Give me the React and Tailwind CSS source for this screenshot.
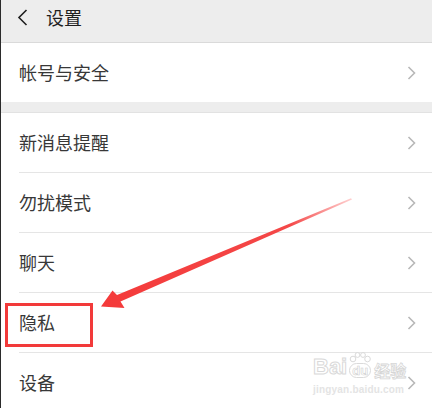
import React from "react";

const groupTwo = ["新消息提醒", "勿扰模式", "聊天", "隐私", "设备"];

const Chevron = () => (
  <svg width="9" height="14" viewBox="0 0 9 14" className="shrink-0">
    <path d="M1.5 1 L7.5 7 L1.5 13" fill="none" stroke="#b8b8b8" strokeWidth="1.6" />
  </svg>
);

const Row = ({ label, last }) => (
  <div className="bg-white">
    <div className="h-[59px] flex items-center justify-between pl-[18px] pr-[16px]">
      <span className="text-[18px] text-[#383838]">{label}</span>
      <Chevron />
    </div>
    {!last && <div className="ml-[18px] h-px bg-[#e5e5e5]" />}
  </div>
);

export default function App() {
  return (
    <div
      className="relative w-[432px] h-[408px] overflow-hidden bg-white border-l border-[#2b2b2b]"
      style={{ fontFamily: '"Noto Sans CJK SC", "Noto Sans", sans-serif' }}
    >
      {/* Header */}
      <div className="h-[42px] bg-[#ededed] flex items-center pl-[16px] pb-[8px] gap-[18px]">
        <svg width="11" height="17" viewBox="0 0 11 17">
          <path d="M9.5 1 L2 8.5 L9.5 16" fill="none" stroke="#1f1f1f" strokeWidth="1.6" />
        </svg>
        <span className="text-[18px] text-[#1f1f1f]">设置</span>
      </div>
      <div className="h-px bg-[#dadada]" />

      <Row label="帐号与安全" last />

      <div className="h-[10px] bg-[#ededed]" />
      <div className="h-px bg-[#e2e2e2]" />

      {groupTwo.map((label, i) => (
        <Row key={label} label={label} last={i === groupTwo.length - 1} />
      ))}

      {/* Watermark */}
      <div className="absolute left-[312px] top-[352px] flex flex-col items-start select-none">
        <div className="flex items-end gap-[2px] leading-none">
          <span
            className="text-[22px] font-bold text-white"
            style={{ WebkitTextStroke: "1px #d9d9d9", fontFamily: '"Liberation Sans", sans-serif' }}
          >
            Bai
          </span>
          <span className="relative flex flex-col items-center">
            <svg width="22" height="11" viewBox="0 0 22 11">
              <circle cx="4" cy="7" r="2.8" fill="none" stroke="#dadada" />
              <circle cx="8.5" cy="3" r="2.4" fill="none" stroke="#dadada" />
              <circle cx="14" cy="3" r="2.4" fill="none" stroke="#dadada" />
              <circle cx="18.5" cy="7" r="2.8" fill="none" stroke="#dadada" />
            </svg>
            <span
              className="text-[13px] font-bold text-white rounded-full px-[2px] border border-[#dadada]"
              style={{ fontFamily: '"Liberation Sans", sans-serif', WebkitTextStroke: "0.6px #d0d0d0" }}
            >
              du
            </span>
          </span>
          <span
            className="text-[16px] font-bold text-white ml-[1px]"
            style={{ WebkitTextStroke: "0.8px #d6d6d6" }}
          >
            经验
          </span>
        </div>
        <span
          className="text-[10px] font-bold text-[#e4e4e4] mt-[4px] tracking-[0.2px]"
          style={{ fontFamily: '"Liberation Sans", sans-serif' }}
        >
          jingyan.baidu.com
        </span>
      </div>

      {/* Highlight box */}
      <div className="absolute left-[4px] top-[303px] w-[88px] h-[44px] border-[3px] border-[#f23a3a]" />

      {/* Arrow */}
      <svg className="absolute left-0 top-0 pointer-events-none" width="432" height="408">
        <defs>
          <linearGradient id="arrowFade" x1="101" y1="306" x2="351" y2="199" gradientUnits="userSpaceOnUse">
            <stop offset="0" stopColor="#f43a3a" />
            <stop offset="0.75" stopColor="#f44848" />
            <stop offset="1" stopColor="#ffd0d0" />
          </linearGradient>
        </defs>
        <polygon
          points="100,306.5 111.5,290.5 116,295 350,198.3 351,199.6 119.5,301.5 123.5,308"
          fill="url(#arrowFade)"
        />
      </svg>
    </div>
  );
}
